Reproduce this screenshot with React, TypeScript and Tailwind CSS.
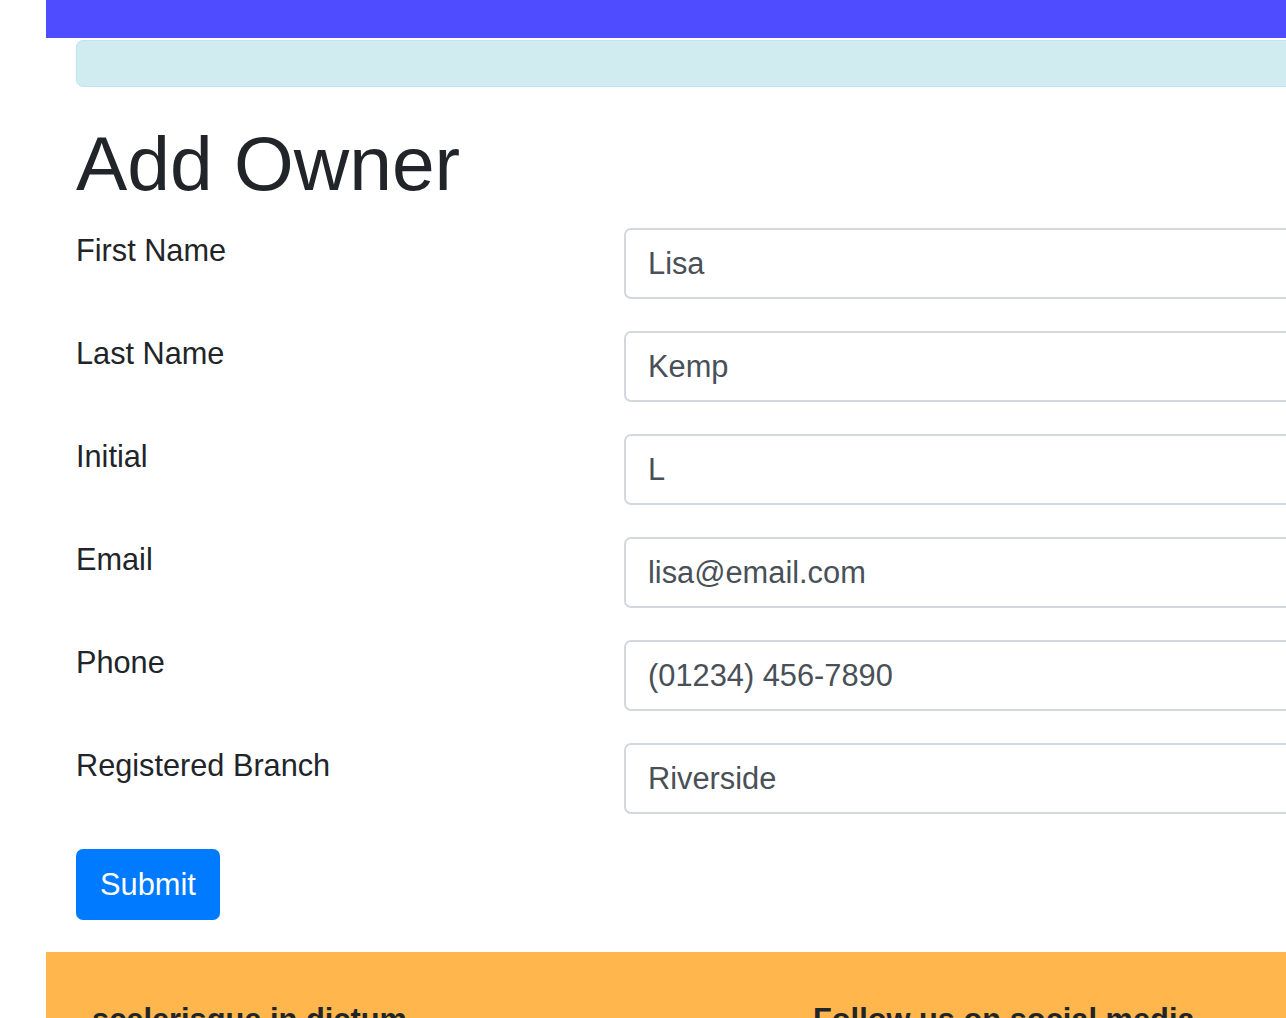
const fields = [
  { label: "First Name", value: "Lisa" },
  { label: "Last Name", value: "Kemp" },
  { label: "Initial", value: "L" },
  { label: "Email", value: "lisa@email.com" },
  { label: "Phone", value: "(01234) 456-7890" },
  { label: "Registered Branch", value: "Riverside" },
];

export default function App() {
  return (
    <div
      className="w-[1286px] h-[1018px] overflow-hidden bg-white text-[#212529]"
      style={{ fontFamily: '"Liberation Sans", Arial, sans-serif' }}
    >
      <div className="ml-[46px] w-[1700px]">
        <nav className="h-[38px] bg-[#4f4bff]" />

        <div className="px-[30px]">
          <div className="mt-[2px] h-[47px] rounded-[7px] border border-[#bee5eb] bg-[#d1ecf1]" />

          <h1 className="mt-[30px] mb-[19px] text-[76.8px] leading-[1.2] font-normal">Add Owner</h1>

          <form className="flex flex-col gap-[32px]" onSubmit={(e) => e.preventDefault()}>
            {fields.map((f) => (
              <div key={f.label} className="grid grid-cols-[548px_1fr]">
                <label className="text-[30.7px] leading-[45px]">{f.label}</label>
                <input
                  type="text"
                  defaultValue={f.value}
                  className="h-[71px] w-full rounded-[7px] border-2 border-[#d3d8de] bg-white px-[22px] text-[30.8px] text-[#495057] outline-none"
                />
              </div>
            ))}
            <div className="pt-[3px]">
              <button
                type="submit"
                className="h-[71px] rounded-[7px] bg-[#007bff] px-[24px] text-[30.8px] text-white"
              >
                Submit
              </button>
            </div>
          </form>
        </div>

        <footer className="mt-[32px] bg-[#ffb64c] pt-[50px] pb-[40px]">
          <div className="grid grid-cols-[721px_1fr] pl-[46px]">
            <h5 className="text-[30.8px] font-bold leading-[1.2] text-[#212529]">scelerisque in dictum</h5>
            <h5 className="text-[30.8px] font-bold leading-[1.2] text-[#212529]">Follow us on social media</h5>
          </div>
          <div className="h-[200px]" />
        </footer>
      </div>
    </div>
  );
}
